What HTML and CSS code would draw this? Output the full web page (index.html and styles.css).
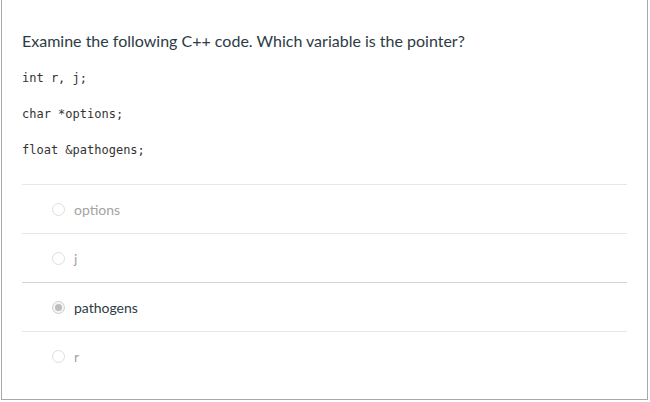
FILE: index.html
```html
<!DOCTYPE html>
<html>
<head>
<meta charset="utf-8">
<link rel="stylesheet" href="styles.css">
</head>
<body>
<div class="card">
  <div class="question">
    <p class="title">Examine the following C++ code. Which variable is the pointer?</p>
    <p class="code">int r, j;</p>
    <p class="code">char *options;</p>
    <p class="code">float &amp;pathogens;</p>
  </div>
  <div class="answers">
    <div class="answer"><span class="radio"></span><span class="label">options</span></div>
    <div class="answer"><span class="radio"></span><span class="label">j</span></div>
    <div class="answer selected"><span class="radio"></span><span class="label">pathogens</span></div>
    <div class="answer"><span class="radio"></span><span class="label">r</span></div>
  </div>
</div>
</body>
</html>
```
FILE: styles.css
```css
html, body {
  margin: 0;
  padding: 0;
  background: #ffffff;
}
body {
  font-family: Lato, "Open Sans", sans-serif;
  color: #2d3b45;
}
.card {
  margin: 0 2px 0 1px;
  border: 1px solid #a9a9a9;
  border-top: none;
  padding: 31px 20px 19px 20px;
}
.question {
  padding-bottom: 26px;
}
.title {
  margin: 0 0 19px 0;
  font-size: 16px;
  line-height: 20px;
  color: #2d3b45;
}
.code {
  margin: 0 0 20px 0;
  font-family: "DejaVu Sans Mono", "Liberation Mono", monospace;
  font-size: 12px;
  line-height: 16px;
  color: #333333;
}
.code:last-child {
  margin-bottom: 0;
}
.answer {
  display: flex;
  align-items: center;
  height: 48px;
  border-top: 1px solid #e6e6e6;
  padding-left: 30px;
  gap: 9px;
}
.answer.selected {
  border-top-color: #d4d4d4;
}
.radio {
  box-sizing: border-box;
  width: 13px;
  height: 13px;
  border-radius: 50%;
  border: 1px solid #dedede;
  background: #ffffff;
  display: flex;
  align-items: center;
  justify-content: center;
}
.selected .radio {
  border-color: #cfcfcf;
  background: #f4f4f4;
}
.selected .radio::after {
  content: "";
  width: 7px;
  height: 7px;
  border-radius: 50%;
  background: #bdbdbd;
}
.label {
  font-size: 14px;
  line-height: 18px;
  color: #a3a3a3;
  padding-top: 1px;
}
.selected .label {
  color: #2d3b45;
}
```
